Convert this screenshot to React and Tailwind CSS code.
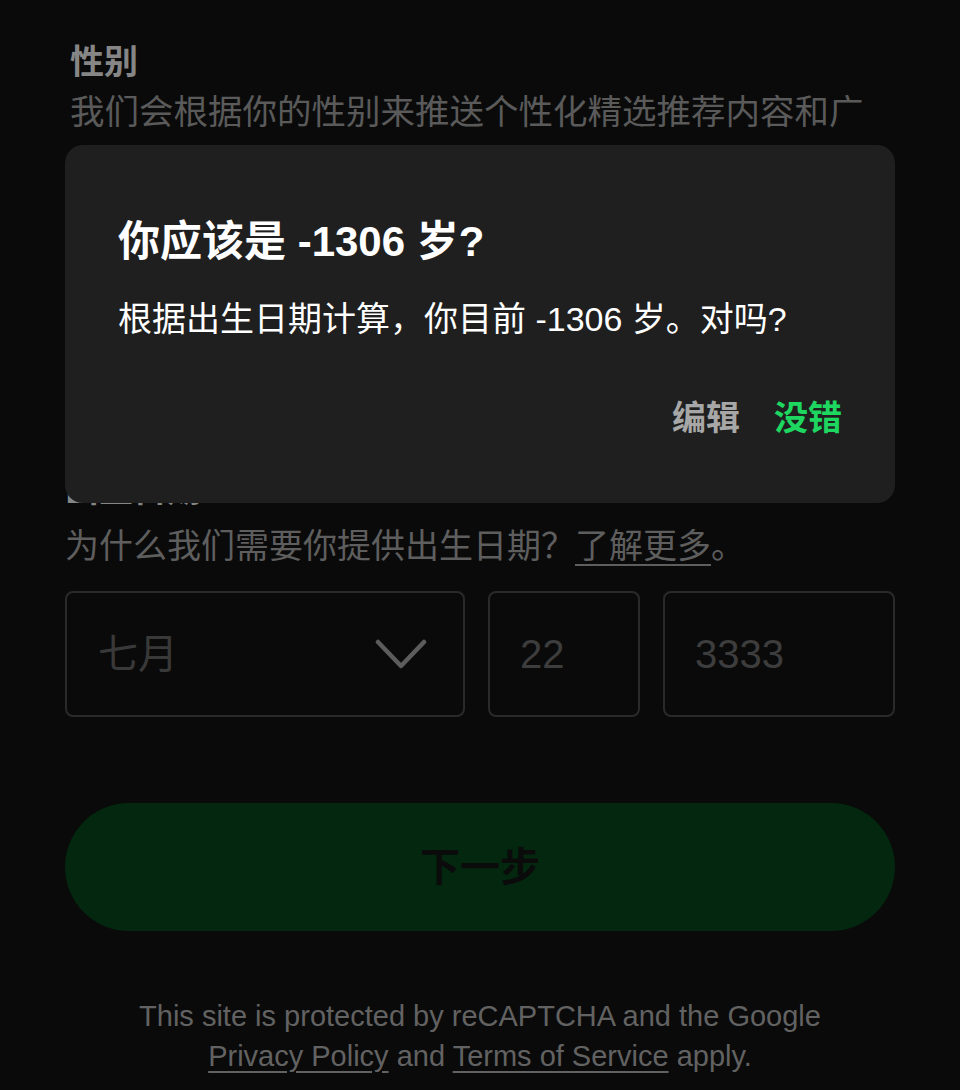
const cjk = { fontFamily: '"Liberation Sans", "Noto Sans CJK SC", sans-serif' }

function ChevronDown() {
  return (
    <svg width="52" height="32" viewBox="0 0 52 32" fill="none" stroke="#5c5c5c" strokeWidth="4.5">
      <path d="M3 4l23 24L49 4" strokeLinecap="round" strokeLinejoin="round" />
    </svg>
  )
}

function ConfirmDialog() {
  return (
    <div className="absolute left-[65px] top-[145px] w-[830px] h-[358px] rounded-[18px] bg-[#1f1f1f] px-[53px] pt-[71px] flex flex-col">
      <h2 className="text-[42px] leading-[52px] font-bold text-white">你应该是 -1306 岁?</h2>
      <p className="mt-[28px] text-[34px] leading-[46px] text-white">根据出生日期计算，你目前 -1306 岁。对吗?</p>
      <div className="mt-[53px] flex justify-end items-center gap-[34px]">
        <button className="text-[34px] leading-[46px] font-bold text-[#a7a7a7]">编辑</button>
        <button className="text-[34px] leading-[46px] font-bold text-[#1ed760]">没错</button>
      </div>
    </div>
  )
}

export default function App() {
  return (
    <div className="relative min-h-[1090px] bg-[#0a0a0a] overflow-hidden" style={cjk}>
      <div className="px-[65px] pt-[40px]">
        <div className="pl-[5px]">
          <div className="text-[34px] leading-[44px] font-bold text-[#868686]">性别</div>
          <p className="mt-[2px] text-[34.5px] leading-[52px] text-[#5a5a5a]">
            我们会根据你的性别来推送个性化精选推荐内容和广告。
          </p>
        </div>

        <div className="mt-[12px] flex gap-[20px] h-[262px]">
          <div className="flex-1 rounded-full border-2 border-[#2a2a2a]" />
          <div className="flex-1 rounded-full border-2 border-[#2a2a2a]" />
        </div>

        <div className="mt-[4px] text-[34px] leading-[44px] font-bold text-[#868686]">出生日期</div>
        <p className="mt-[12px] text-[34px] leading-[44px] text-[#5e5e5e]">
          为什么我们需要你提供出生日期？<span className="underline underline-offset-[6px] decoration-2">了解更多</span>。
        </p>

        <div className="mt-[23px] flex gap-[23px] h-[126px]">
          <div className="w-[400px] rounded-[8px] border-2 border-[#2a2a2a] flex items-center justify-between pl-[31px] pr-[36px]">
            <span className="text-[40px] text-[#393939]">七月</span>
            <ChevronDown />
          </div>
          <div className="w-[152px] rounded-[8px] border-2 border-[#2a2a2a] flex items-center pl-[30px]">
            <span className="text-[40px] text-[#3d3d3d]">22</span>
          </div>
          <div className="flex-1 rounded-[8px] border-2 border-[#2a2a2a] flex items-center pl-[30px]">
            <span className="text-[40px] text-[#3d3d3d]">3333</span>
          </div>
        </div>

        <button className="mt-[86px] w-full h-[128px] rounded-full bg-[#03270f] flex items-center justify-center">
          <span className="text-[40px] font-bold text-[#0b0b0b]">下一步</span>
        </button>

        <div className="mt-[65px] text-center text-[29px] leading-[40px] text-[#626262]">
          <p>This site is protected by reCAPTCHA and the Google</p>
          <p>
            <span className="underline underline-offset-[5px]">Privacy Policy</span> and{' '}
            <span className="underline underline-offset-[5px]">Terms of Service</span> apply.
          </p>
        </div>
      </div>

      <ConfirmDialog />
    </div>
  )
}
